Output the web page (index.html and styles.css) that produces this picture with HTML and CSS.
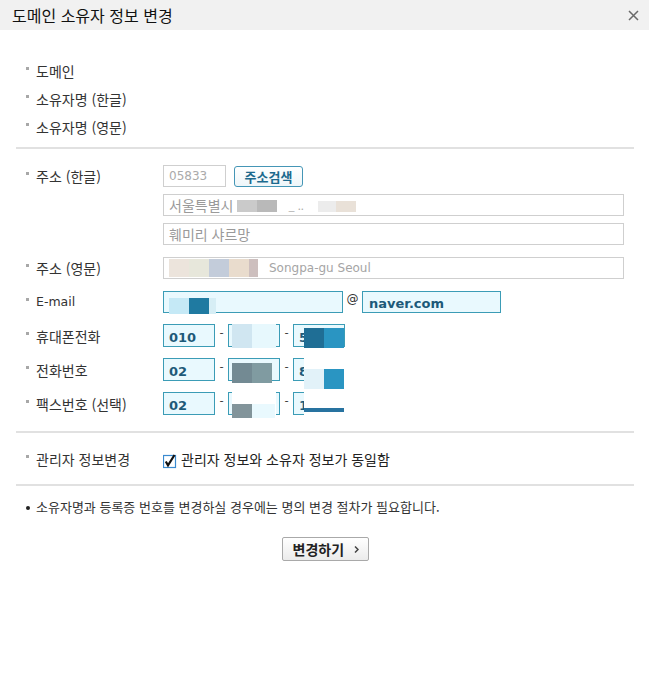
FILE: index.html
```html
<!DOCTYPE html>
<html lang="ko">
<head>
    <meta charset="UTF-8">
    <meta name="viewport" content="width=device-width, initial-scale=1.0">
    <title>도메인 소유자 정보 변경</title>
    <link rel="stylesheet" href="styles.css">
</head>
<body>
    <div class="dialog">
        <!-- Title bar -->
        <div class="dialog-head">
            <h1>도메인 소유자 정보 변경</h1>
            <span class="close">
                <svg width="11" height="11" viewBox="0 0 11 11"><path d="M1 1L10 10M10 1L1 10" stroke="#6a6a6a" stroke-width="1.5"/></svg>
            </span>
        </div>

        <div class="dialog-body">
            <!-- Read only owner info -->
            <div class="section owner-info">
                <div class="row"><span class="label">도메인</span></div>
                <div class="row"><span class="label">소유자명 (한글)</span></div>
                <div class="row"><span class="label">소유자명 (영문)</span></div>
            </div>

            <!-- Editable fields -->
            <div class="section owner-form">
                <div class="row row-top">
                    <span class="label">주소 (한글)</span>
                    <div class="fields">
                        <div class="line">
                            <span class="input zip">05833</span>
                            <button class="btn-search">주소검색</button>
                        </div>
                        <span class="input wide">서울특별시<span class="pix pix-kr"><i class="c1"></i><i class="c2"></i></span><span class="dots">_ ..</span><span class="pix pix-kr2"><i class="c3"></i><i class="c4"></i></span></span>
                        <span class="input wide">훼미리 샤르망</span>
                    </div>
                </div>

                <div class="row row-addr-en">
                    <span class="label">주소 (영문)</span>
                    <span class="input wide latin"><span class="pix pix-en"><i class="e1"></i><i class="e2"></i><i class="e3"></i><i class="e4"></i><i class="e5"></i></span>Songpa-gu Seoul</span>
                </div>

                <div class="row row-mail">
                    <span class="label latin-label">E-mail</span>
                    <span class="input blue mail-id"><span class="mask mask-mail"><i class="m1"></i><i class="m2"></i><i class="m3"></i></span></span>
                    <span class="at">@</span>
                    <span class="input blue mail-domain">naver.com</span>
                </div>

                <div class="row row-phone">
                    <span class="label">휴대폰전화</span>
                    <span class="input blue tel">010</span>
                    <span class="dash">-</span>
                    <span class="input blue tel"><span class="mask mask-a"><i class="p1"></i><i class="p2"></i></span></span>
                    <span class="dash">-</span>
                    <span class="input blue tel">5<span class="mask mask-b"><i class="p3"></i><i class="p4"></i></span></span>
                </div>

                <div class="row row-phone">
                    <span class="label">전화번호</span>
                    <span class="input blue tel">02</span>
                    <span class="dash">-</span>
                    <span class="input blue tel"><span class="mask mask-c"><i class="p5"></i><i class="p6"></i></span></span>
                    <span class="dash">-</span>
                    <span class="input blue tel">8<span class="mask mask-d"><i class="p7"></i><i class="p8"></i></span></span>
                </div>

                <div class="row row-phone">
                    <span class="label">팩스번호 (선택)</span>
                    <span class="input blue tel">02</span>
                    <span class="dash">-</span>
                    <span class="input blue tel"><span class="mask mask-e"><i class="p9"></i><i class="p10"></i></span></span>
                    <span class="dash">-</span>
                    <span class="input blue tel">1<span class="mask mask-f"><i class="p11"></i></span></span>
                </div>
            </div>

            <!-- Admin contact -->
            <div class="section admin">
                <div class="row">
                    <span class="label">관리자 정보변경</span>
                    <label class="check">
                        <svg width="14" height="17" viewBox="0 0 14 17"><rect x="0.5" y="3.5" width="12" height="12" fill="#fff" stroke="#3a8ad0" stroke-width="1.2"/><path d="M2.8 9.5L5 13.3L11.5 3" fill="none" stroke="#111" stroke-width="2.2"/></svg>
                        관리자 정보와 소유자 정보가 동일함
                    </label>
                </div>
            </div>

            <p class="note">소유자명과 등록증 번호를 변경하실 경우에는 명의 변경 절차가 필요합니다.</p>

            <div class="actions">
                <button class="btn-submit">변경하기
                    <svg width="5" height="7" viewBox="0 0 5 7"><path d="M1 0.5L4 3.5L1 6.5" fill="none" stroke="#444" stroke-width="1.5"/></svg>
                </button>
            </div>
        </div>
    </div>
</body>
</html>
```

FILE: styles.css
```css
body {
    margin: 0;
    background: #fff;
    color: #333;
    font-family: "Noto Sans CJK KR", "Noto Sans", sans-serif;
}

/* Title bar */
.dialog-head {
    height: 30px;
    background: #f1f1f1;
    display: flex;
    align-items: center;
    justify-content: space-between;
    padding: 0 10px 0 12px;
}

.dialog-head h1 {
    margin: 0;
    font-size: 16px;
    font-weight: normal;
    color: #111;
    line-height: 30px;
}

.close {
    display: flex;
    margin-top: 1px;
}

.dialog-body {
    padding: 0 15px 0 16px;
}

.section {
    border-bottom: 2px solid #e1e1e1;
}

.owner-info {
    padding: 27px 0 6px;
}

.owner-info .row {
    height: 28px;
}

.row {
    display: flex;
    align-items: center;
}

/* Label with small gray square bullet */
.label {
    flex: 0 0 137px;
    padding-left: 10px;
    font-size: 14px;
    line-height: 22px;
    color: #333;
    display: flex;
    align-items: center;
}

.label::before {
    content: "";
    width: 3px;
    height: 3px;
    background: #a8a8a8;
    margin: -5px 7px 0 0;
}

.latin-label {
    font-family: "DejaVu Sans", sans-serif;
    font-size: 12.5px;
}

.owner-form {
    padding: 16px 0 16px;
}

.row-top {
    align-items: flex-start;
}

.fields {
    display: flex;
    flex-direction: column;
    gap: 7px;
}

.line {
    display: flex;
    align-items: center;
    gap: 8px;
}

/* Inputs */
.input {
    box-sizing: border-box;
    height: 22px;
    border: 1px solid #cfcfcf;
    background: #fff;
    color: #9a9a9a;
    font-size: 14px;
    padding: 0 5px;
    display: flex;
    align-items: center;
    position: relative;
    white-space: nowrap;
}

.zip {
    width: 63px;
    font-family: "DejaVu Sans", sans-serif;
    font-size: 12px;
    color: #aaa;
}

.wide {
    width: 461px;
}

.latin {
    font-family: "DejaVu Sans", sans-serif;
    font-size: 12px;
    color: #a5a5a5;
}

.btn-search {
    box-sizing: border-box;
    width: 69px;
    height: 21px;
    border: 1px solid #4596b6;
    border-radius: 3px;
    background: linear-gradient(#ffffff, #eef6f9);
    color: #1c6a8e;
    font-family: "Noto Sans CJK KR", sans-serif;
    font-size: 13px;
    font-weight: bold;
    padding: 0;
    line-height: 19px;
}

.row-addr-en {
    margin-top: 12px;
}

.row-mail {
    margin-top: 12px;
}

.row-phone {
    margin-top: 11px;
}

.blue {
    border-color: #3b9cb6;
    background: #e9f9fe;
    color: #1d5a79;
    font-family: "DejaVu Sans", sans-serif;
    font-size: 13px;
    font-weight: bold;
    padding-top: 2px;
}

.mail-id {
    width: 180px;
}

.mail-domain {
    width: 139px;
    padding-left: 6px;
}

.at {
    width: 19px;
    text-align: center;
    font-family: "DejaVu Sans", sans-serif;
    font-size: 12px;
    color: #333;
    margin-top: -6px;
}

.tel {
    width: 52px;
    height: 23px;
    padding-left: 5px;
    padding-top: 3px;
}

.dash {
    width: 13px;
    text-align: center;
    font-size: 12px;
    color: #333;
    margin-top: -6px;
}

/* Pixelated (censored) parts */
.pix {
    display: flex;
}

.pix i, .mask i {
    display: block;
    height: 100%;
}

.pix-kr {
    height: 12px;
    margin: 2px 0 0 4px;
}

.pix-kr .c1 { width: 20px; background: #cacaca; }
.pix-kr .c2 { width: 20px; background: #b9b9b9; }

.dots {
    margin-left: 11px;
    font-size: 11px;
    color: #aaa;
    width: 30px;
}

.pix-kr2 {
    height: 11px;
    margin-top: 2px;
}

.pix-kr2 .c3 { width: 18px; background: #ececec; }
.pix-kr2 .c4 { width: 20px; background: #e9e1d8; }

.pix-en {
    height: 18px;
    margin: 0 11px 0 0;
}

.pix-en .e1 { width: 20px; background: #ece4dc; }
.pix-en .e2 { width: 20px; background: #e7e7db; }
.pix-en .e3 { width: 20px; background: #c3ccda; }
.pix-en .e4 { width: 20px; background: #e9dccd; }
.pix-en .e5 { width: 9px; background: #cdbfbe; }

.mask {
    position: absolute;
    display: flex;
    background: #fff;
}

.mask-mail {
    left: 5px;
    top: 6px;
    height: 16px;
    background: none;
}

.mask-mail .m1 { width: 20px; background: #c5e9f6; }
.mask-mail .m2 { width: 20px; background: #1f7aa1; }
.mask-mail .m3 { width: 7px; background: #d6eef5; }

.mask-a {
    left: 3px;
    top: -1px;
    height: 24px;
}

.mask-a .p1 { width: 20px; background: #d0e6f1; }
.mask-a .p2 { width: 24px; background: #e7f8fd; }

.mask-b {
    left: 10px;
    top: 3px;
    height: 20px;
}

.mask-b .p3 { width: 20px; background: #1f6e95; }
.mask-b .p4 { width: 20px; background: #2a95c2; }

.mask-c {
    left: 3px;
    top: 4px;
    height: 20px;
}

.mask-c .p5 { width: 20px; background: #738a93; }
.mask-c .p6 { width: 20px; background: #809ba1; }

.mask-d {
    left: 10px;
    top: -1px;
    width: 43px;
    height: 31px;
    align-items: flex-end;
}

.mask-d .p7 { width: 20px; height: 20px; background: #e2f2f9; }
.mask-d .p8 { width: 20px; height: 20px; background: #2a95c2; }

.mask-e {
    left: 3px;
    top: -1px;
    width: 44px;
    height: 26px;
    align-items: flex-end;
}

.mask-e .p9 { width: 20px; height: 14px; background: #82949a; }
.mask-e .p10 { width: 23px; height: 14px; background: #e9f9fe; }

.mask-f {
    left: 10px;
    top: -1px;
    width: 43px;
    height: 25px;
}

.mask-f .p11 { width: 40px; height: 4px; margin-top: 16px; background: #2873a0; }

/* Admin row */
.admin {
    padding: 13px 0;
}

.admin .row {
    height: 25px;
}

.check {
    display: flex;
    align-items: center;
    gap: 4px;
    font-size: 14px;
    color: #222;
}

.check svg {
    margin-top: 4px;
}

/* Note */
.note {
    margin: 12px 0 0;
    padding-left: 10px;
    font-size: 13px;
    line-height: 18px;
    color: #333;
    display: flex;
    align-items: center;
}

.note::before {
    content: "";
    width: 4px;
    height: 4px;
    border-radius: 50%;
    background: #222;
    margin: 1px 6px 0 0;
}

.actions {
    display: flex;
    justify-content: center;
    margin-top: 21px;
}

.btn-submit {
    box-sizing: border-box;
    width: 87px;
    height: 24px;
    border: 1px solid #a9a9a9;
    border-radius: 2px;
    background: linear-gradient(#ffffff, #ebebeb);
    font-family: "Noto Sans CJK KR", sans-serif;
    font-size: 14px;
    font-weight: bold;
    color: #222;
    display: flex;
    align-items: center;
    padding: 0 0 0 10px;
    gap: 10px;
}
```
